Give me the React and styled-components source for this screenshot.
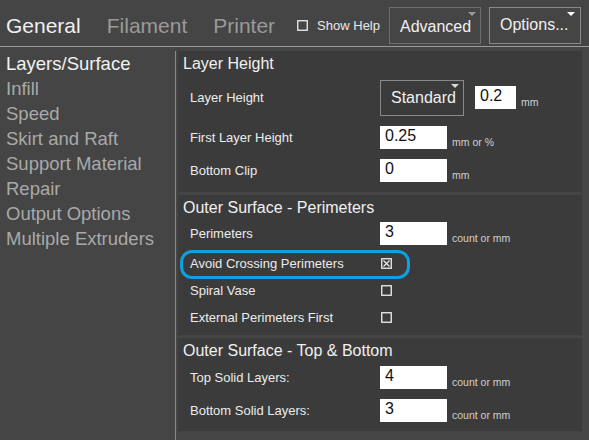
import React from 'react'
import styled, { createGlobalStyle } from 'styled-components'

const GlobalStyle = createGlobalStyle`
  html, body, #root {
    margin: 0;
    height: 100%;
  }
  body {
    background: #454545;
    color: #eeeeee;
    font-family: "Liberation Sans", Arial, sans-serif;
    overflow: hidden;
  }
`

const Page = styled.div`
  display: flex;
  flex-direction: column;
  height: 100vh;
`

const Header = styled.header`
  display: flex;
  align-items: center;
  height: 47px;
  box-sizing: border-box;
  padding: 5px 0 0 6px;
  border-bottom: 1px solid #9a9a9a;
  white-space: nowrap;
  & > * {
    flex-shrink: 0;
  }
`

const Tab = styled.div`
  font-size: 21px;
  color: ${p => (p.$active ? '#f0f0f0' : '#9a9a9a')};
  margin-right: ${p => p.$gap ?? 26}px;
`

const HelpToggle = styled.label`
  display: flex;
  align-items: center;
  gap: 9px;
  font-size: 13px;
  color: #e8e8e8;
  margin-right: 9px;
`

const MenuButton = styled.div`
  position: relative;
  width: 92px;
  height: 37px;
  box-sizing: border-box;
  border: 1px solid ${p => p.$border};
  display: flex;
  align-items: center;
  padding: ${p => p.$pad};
  font-size: 16px;
  color: #f0f0f0;
  margin-right: 8px;
`

const Caret = styled.span`
  position: absolute;
  top: ${p => p.$top}px;
  right: ${p => p.$right}px;
  width: 0;
  height: 0;
  border-left: 4px solid transparent;
  border-right: 4px solid transparent;
  border-top: 4px solid ${p => p.$color};
`

const Body = styled.div`
  flex: 1;
  display: flex;
  min-height: 0;
`

const Sidebar = styled.nav`
  width: 176px;
  box-sizing: border-box;
  margin-top: 4px;
  padding-left: 6px;
  border-right: 1px solid #8a8a8a;
`

const NavItem = styled.div`
  font-size: 18.5px;
  line-height: 25px;
  color: ${p => (p.$active ? '#f2f2f2' : '#a9a9a9')};
`

const Main = styled.main`
  flex: 1;
  display: flex;
  flex-direction: column;
  gap: 3px;
  padding: 4px 7px 0 2px;
`

const Panel = styled.section`
  background: #3b3b3b;
  padding: 4px 0 4px;
`

const PanelTitle = styled.div`
  font-size: 16px;
  line-height: 18px;
  padding-left: 5px;
  color: #f0f0f0;
`

const Row = styled.div`
  position: relative;
  display: flex;
  align-items: center;
  height: ${p => p.$h}px;
  padding-left: 12px;
`

const Label = styled.div`
  width: 190px;
  flex-shrink: 0;
  font-size: 13px;
  color: #ececec;
`

const Select = styled.div`
  position: relative;
  width: 84px;
  height: 36px;
  box-sizing: border-box;
  border: 1px solid #8a8a8a;
  display: flex;
  align-items: center;
  padding: 1px 0 0 10px;
  font-size: 16px;
  color: #f0f0f0;
  margin-right: 11px;
`

const FieldGroup = styled.div`
  display: flex;
  align-items: flex-end;
  gap: 5px;
`

const Field = styled.div`
  width: ${p => p.$w}px;
  height: 23px;
  box-sizing: border-box;
  background: #ffffff;
  color: #111111;
  font-size: 16px;
  line-height: 18px;
  padding: 1px 0 0 5px;
`

const Unit = styled.span`
  font-size: 10.5px;
  line-height: 12px;
  color: #d0d0d0;
  margin-bottom: 1px;
`

const Box = styled.svg`
  margin-left: 1px;
  display: block;
`

const Highlight = styled.div`
  position: absolute;
  left: 2px;
  top: 1px;
  width: 230px;
  height: 29px;
  box-sizing: border-box;
  border: 3px solid #0fa0e2;
  border-radius: 12px;
  pointer-events: none;
`

function Checkbox({ checked }) {
  return (
    <Box width="11" height="11" viewBox="0 0 11 11">
      <rect x="0.75" y="0.75" width="9.5" height="9.5" fill="none" stroke="#f0f0f0" strokeWidth="1.3" />
      {checked && (
        <path d="M2.5 2.5 L8.5 8.5 M8.5 2.5 L2.5 8.5" stroke="#f0f0f0" strokeWidth="1.2" />
      )}
    </Box>
  )
}

function NumberRow({ h, label, value, unit }) {
  return (
    <Row $h={h}>
      <Label>{label}</Label>
      <FieldGroup>
        <Field $w={67}>{value}</Field>
        <Unit>{unit}</Unit>
      </FieldGroup>
    </Row>
  )
}

const sections = [
  'Layers/Surface',
  'Infill',
  'Speed',
  'Skirt and Raft',
  'Support Material',
  'Repair',
  'Output Options',
  'Multiple Extruders',
]

export default function App() {
  return (
    <Page>
      <GlobalStyle />
      <Header>
        <Tab $active>General</Tab>
        <Tab>Filament</Tab>
        <Tab $gap={21}>Printer</Tab>
        <HelpToggle>
          <Checkbox />
          Show Help
        </HelpToggle>
        <MenuButton $border="#6e6e6e" $pad="2px 0 0 10px">
          Advanced
          <Caret $top={4} $right={4} $color="#9a9a9a" />
        </MenuButton>
        <MenuButton $border="#888888" $pad="0 0 2px 10px">
          Options...
          <Caret $top={4} $right={5} $color="#ffffff" />
        </MenuButton>
      </Header>

      <Body>
        <Sidebar>
          {sections.map((s, i) => (
            <NavItem key={s} $active={i === 0}>{s}</NavItem>
          ))}
        </Sidebar>

        <Main>
          <Panel>
            <PanelTitle>Layer Height</PanelTitle>
            <Row $h={49}>
              <Label>Layer Height</Label>
              <Select>
                Standard
                <Caret $top={3} $right={4} $color="#d8d8d8" />
              </Select>
              <FieldGroup>
                <Field $w={41}>0.2</Field>
                <Unit>mm</Unit>
              </FieldGroup>
            </Row>
            <NumberRow h={31} label="First Layer Height" value="0.25" unit="mm or %" />
            <NumberRow h={35} label="Bottom Clip" value="0" unit="mm" />
          </Panel>

          <Panel>
            <PanelTitle>Outer Surface - Perimeters</PanelTitle>
            <NumberRow h={32} label="Perimeters" value="3" unit="count or mm" />
            <Row $h={28}>
              <Label>Avoid Crossing Perimeters</Label>
              <Checkbox checked />
              <Highlight />
            </Row>
            <Row $h={26}>
              <Label>Spiral Vase</Label>
              <Checkbox />
            </Row>
            <Row $h={28}>
              <Label>External Perimeters First</Label>
              <Checkbox />
            </Row>
          </Panel>

          <Panel>
            <PanelTitle>Outer Surface - Top &amp; Bottom</PanelTitle>
            <NumberRow h={34} label="Top Solid Layers:" value="4" unit="count or mm" />
            <NumberRow h={33} label="Bottom Solid Layers:" value="3" unit="count or mm" />
          </Panel>
        </Main>
      </Body>
    </Page>
  )
}
